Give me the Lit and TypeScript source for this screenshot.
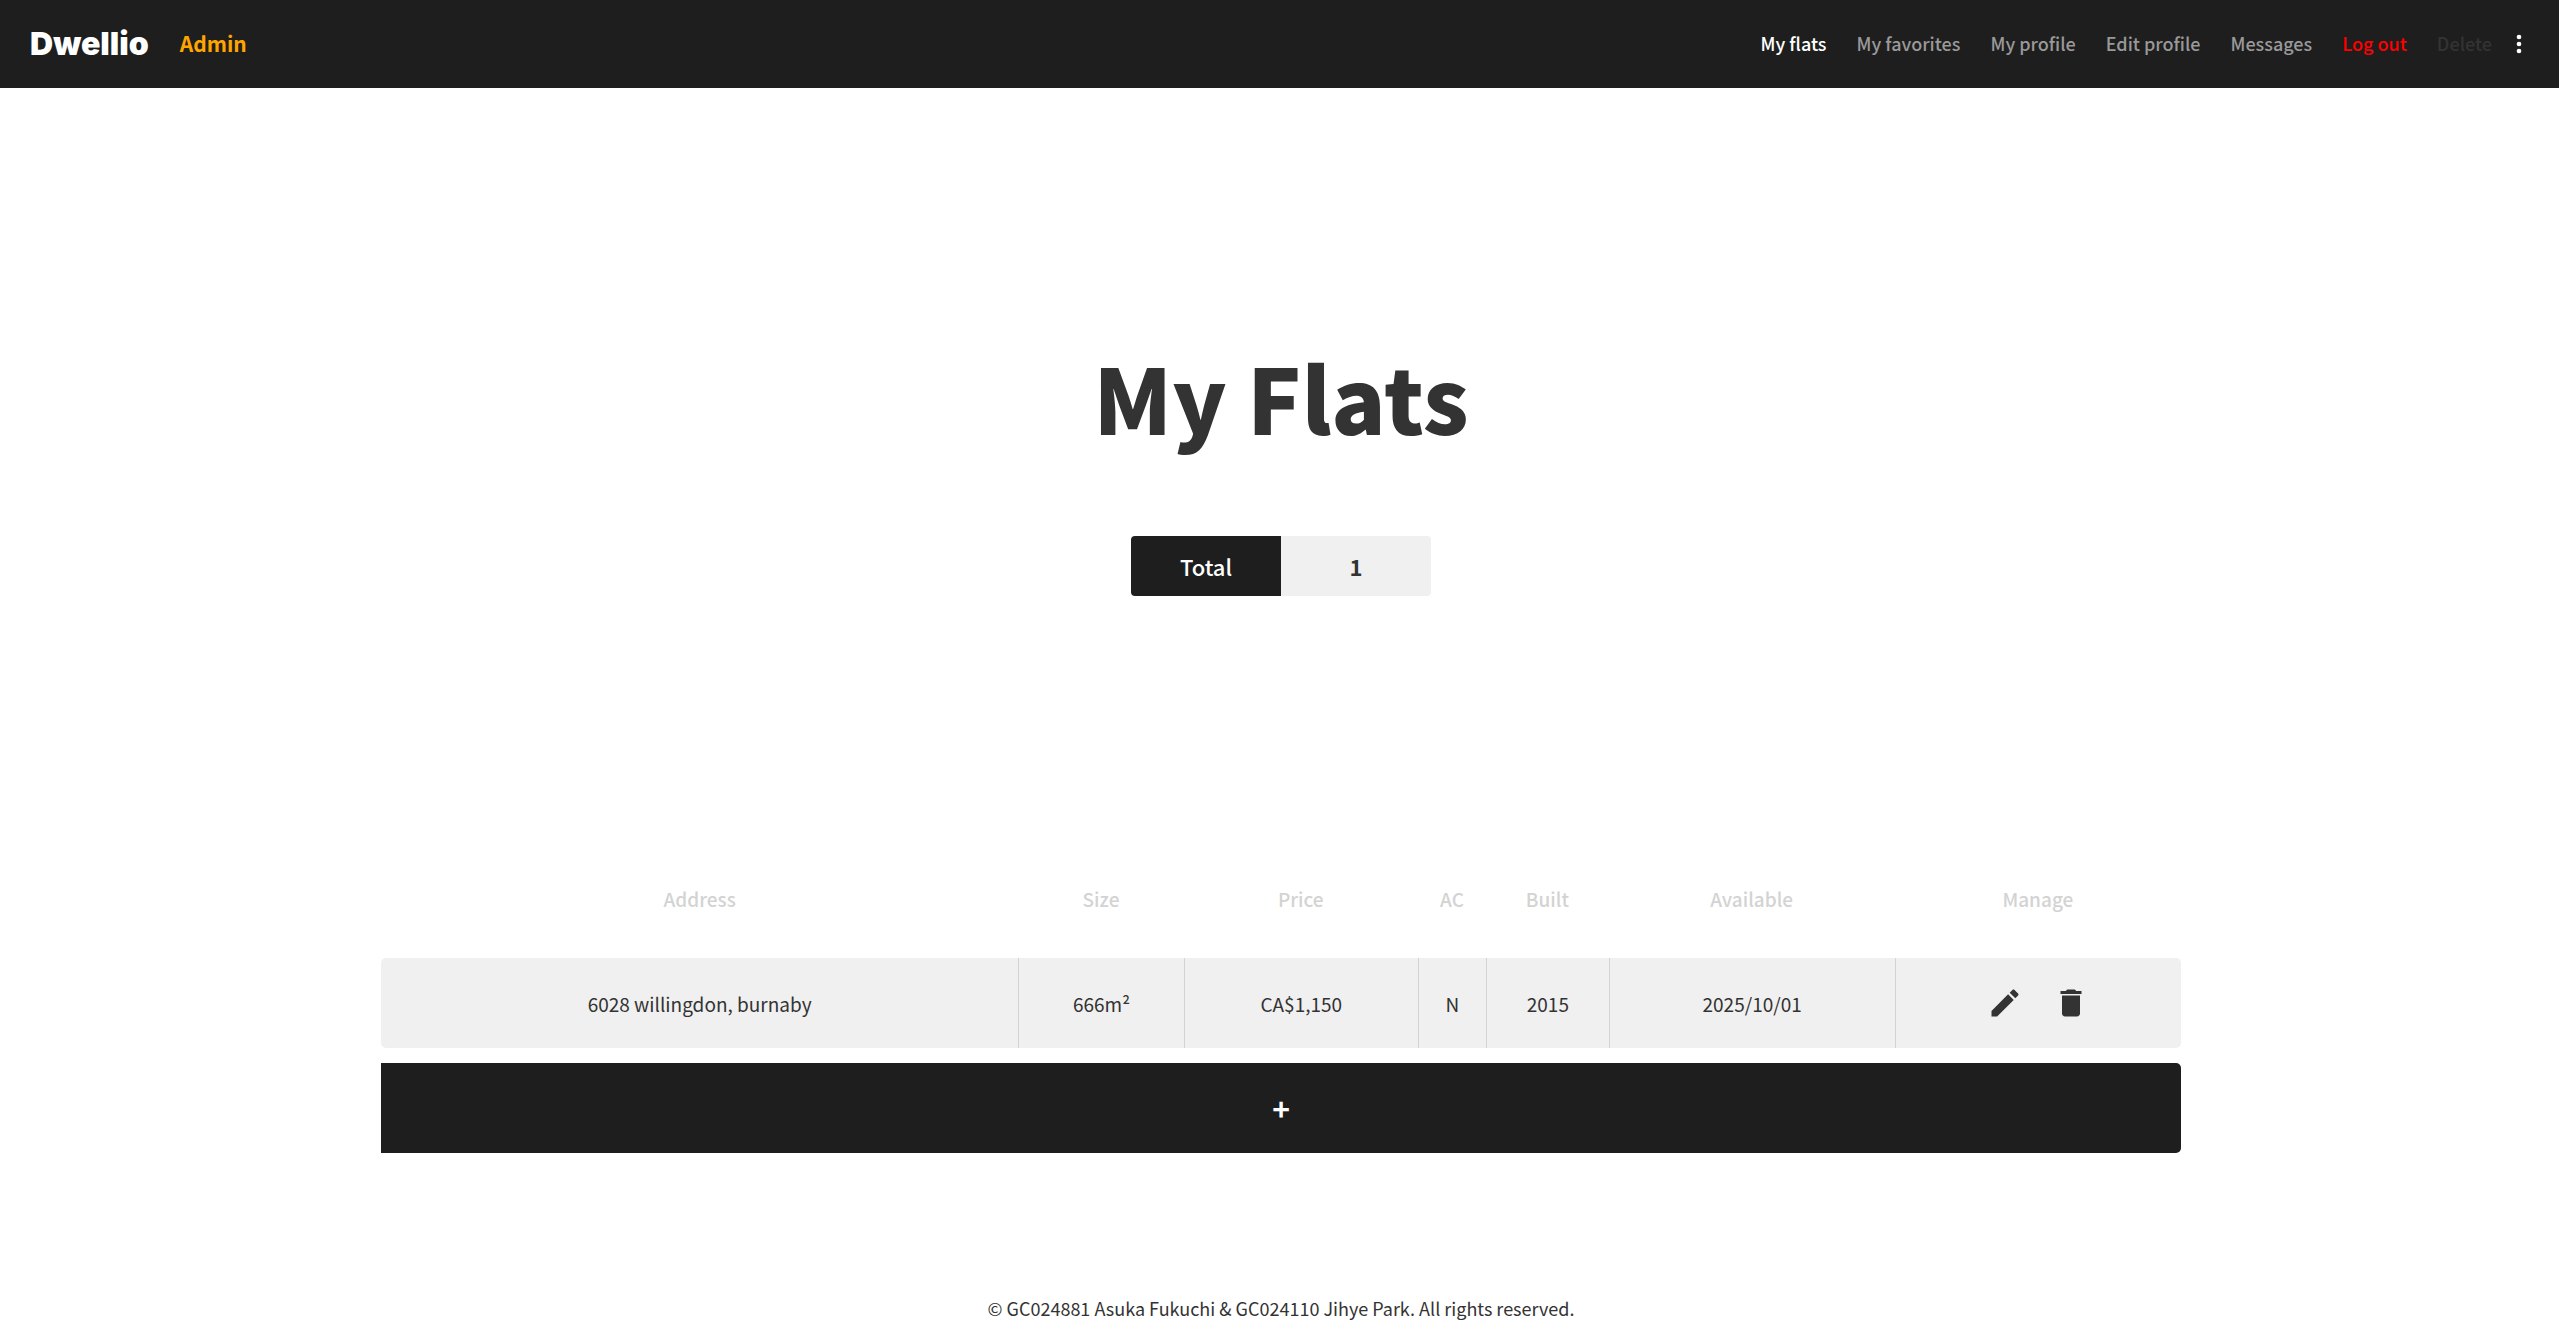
import { LitElement, html, css, svg } from "lit";
import { customElement, state } from "lit/decorators.js";
import { classMap } from "lit/directives/class-map.js";

interface Flat {
  address: string;
  size: number;
  price: string;
  ac: string;
  built: number;
  available: string;
}

const editIcon = svg`<path d="M3 17.25V21h3.75L17.81 9.94l-3.75-3.75L3 17.25zM20.71 7.04c.39-.39.39-1.02 0-1.41l-2.34-2.34c-.39-.39-1.02-.39-1.41 0l-1.83 1.83 3.75 3.75 1.83-1.83z"/>`;
const deleteIcon = svg`<path d="M6 19c0 1.100.9 2 2 2h8c1.100 0 2-.9 2-2V7H6v12zM19 4h-3.500l-1-1h-5l-1 1H5v2h14V4z"/>`;
const moreIcon = svg`<circle cx="12" cy="6" r="2"/><circle cx="12" cy="12" r="2"/><circle cx="12" cy="18" r="2"/>`;

const links = [
  { label: "My flats", kind: "active" },
  { label: "My favorites", kind: "" },
  { label: "My profile", kind: "" },
  { label: "Edit profile", kind: "" },
  { label: "Messages", kind: "" },
  { label: "Log out", kind: "logout" },
  { label: "Delete", kind: "delete" },
];

const columns = ["Address", "Size", "Price", "AC", "Built", "Available", "Manage"];

@customElement("app-root")
export class AppRoot extends LitElement {
  @state() private flats: Flat[] = [
    { address: "6028 willingdon, burnaby", size: 666, price: "CA$1,150", ac: "N", built: 2015, available: "2025/10/01" },
  ];

  static styles = css`
    :host {
      display: flex;
      flex-direction: column;
      min-height: 100vh;
      background: #fff;
      color: #333;
      font-family: "Noto Sans CJK JP", "Noto Sans", sans-serif;
      font-size: 19px;
      line-height: 30px;
    }
    * { box-sizing: border-box; }
    a { color: inherit; text-decoration: none; }
    button {
      display: flex;
      align-items: center;
      justify-content: center;
      padding: 0;
      border: 0;
      background: none;
      color: inherit;
      font: inherit;
      cursor: pointer;
    }
    svg { display: block; fill: currentColor; }
    .bar {
      display: flex;
      align-items: center;
      justify-content: space-between;
      height: 88px;
      padding: 0 26px 0 30px;
      background: #1e1e1e;
    }
    .brand { display: flex; align-items: center; gap: 31px; }
    .logo {
      color: #fff;
      font-family: Inter, sans-serif;
      font-size: 32px;
      font-weight: 900;
    }
    .role { padding-bottom: 2px; color: #ffa500; font-size: 21px; font-weight: 700; }
    .links {
      display: flex;
      align-items: center;
      gap: 30px;
      padding-bottom: 2px;
      color: #999;
      font-size: 18px;
      font-weight: 500;
    }
    .active { color: #fff; }
    .logout { color: #f00; }
    .delete { color: #333; }
    .nav { display: flex; align-items: center; gap: 13px; }
    .more { color: #fff; }
    .more svg { width: 28px; height: 28px; }
    main {
      display: flex;
      flex-direction: column;
      align-items: center;
      padding: 239px 16px 0 19px;
    }
    h1 { margin: 0; font-size: 90px; line-height: 138px; font-weight: 900; }
    .total {
      display: flex;
      margin: 71px 0 0;
      border-radius: 4px;
      overflow: hidden;
      font-size: 22px;
      font-weight: 500;
      line-height: 60px;
      text-align: center;
    }
    .total dt, .total dd { width: 150px; margin: 0; }
    .total dt { background: #1e1e1e; color: #fff; }
    .total dd { background: #f0f0f0; font-weight: 700; }
    table {
      width: 100%;
      max-width: 1800px;
      margin-top: 242px;
      border-collapse: separate;
      border-spacing: 0 15px;
      table-layout: fixed;
      text-align: center;
    }
    .c0 { width: 35.4%; }
    .c1 { width: 9.2%; }
    .c2 { width: 13%; }
    .c3 { width: 3.8%; }
    .c4 { width: 6.8%; }
    .c5, .c6 { width: 15.9%; }
    th, td { height: 90px; padding: 0; }
    th, .flat td:not(:last-child) { padding-top: 2px; }
    th { color: #d3d3d3; font-weight: 500; }
    .flat td { background: #f0f0f0; }
    .flat td + td { border-left: 1px solid #d3d3d3; }
    .flat td:first-child { border-radius: 5px 0 0 5px; }
    .flat td:last-child { border-radius: 0 5px 5px 0; }
    .manage { display: flex; justify-content: center; gap: 30px; }
    .manage svg { width: 36px; height: 36px; }
    .add {
      width: 100%;
      height: 90px;
      border-radius: 0 5px 5px 0;
      background: #1e1e1e;
      color: #fff;
      font-size: 30px;
      font-weight: 700;
    }
    footer { margin-top: auto; padding: 16px 16px 16px 19px; text-align: center; font-size: 18px; }
  `;

  render() {
    return html`
      <header class="bar">
        <div class="brand">
          <a class="logo" href="#">Dwellio</a>
          <span class="role">Admin</span>
        </div>
        <div class="nav">
          <nav class="links">
            ${links.map(
              (l) => html`<a href="#" class=${classMap({ active: l.kind === "active", logout: l.kind === "logout", delete: l.kind === "delete" })}>${l.label}</a>`,
            )}
          </nav>
          <button class="more" aria-label="More"><svg viewBox="0 0 24 24">${moreIcon}</svg></button>
        </div>
      </header>
      <main>
        <h1>My Flats</h1>
        <dl class="total">
          <dt>Total</dt>
          <dd>${this.flats.length}</dd>
        </dl>
        <table>
          <colgroup>${columns.map((_, i) => html`<col class="c${i}" />`)}</colgroup>
          <thead>
            <tr>${columns.map((c) => html`<th scope="col">${c}</th>`)}</tr>
          </thead>
          <tbody>
            ${this.flats.map(
              (f) => html`<tr class="flat">
                <td>${f.address}</td>
                <td>${f.size}m²</td>
                <td>${f.price}</td>
                <td>${f.ac}</td>
                <td>${f.built}</td>
                <td>${f.available}</td>
                <td>
                  <div class="manage">
                    <button aria-label="Edit"><svg viewBox="0 0 24 24">${editIcon}</svg></button>
                    <button aria-label="Delete"><svg viewBox="0 0 24 24">${deleteIcon}</svg></button>
                  </div>
                </td>
              </tr>`,
            )}
            <tr>
              <td colspan="7"><button class="add" aria-label="Add flat">+</button></td>
            </tr>
          </tbody>
        </table>
      </main>
      <footer>© GC024881 Asuka Fukuchi &amp; GC024110 Jihye Park. All rights reserved.</footer>
    `;
  }
}
